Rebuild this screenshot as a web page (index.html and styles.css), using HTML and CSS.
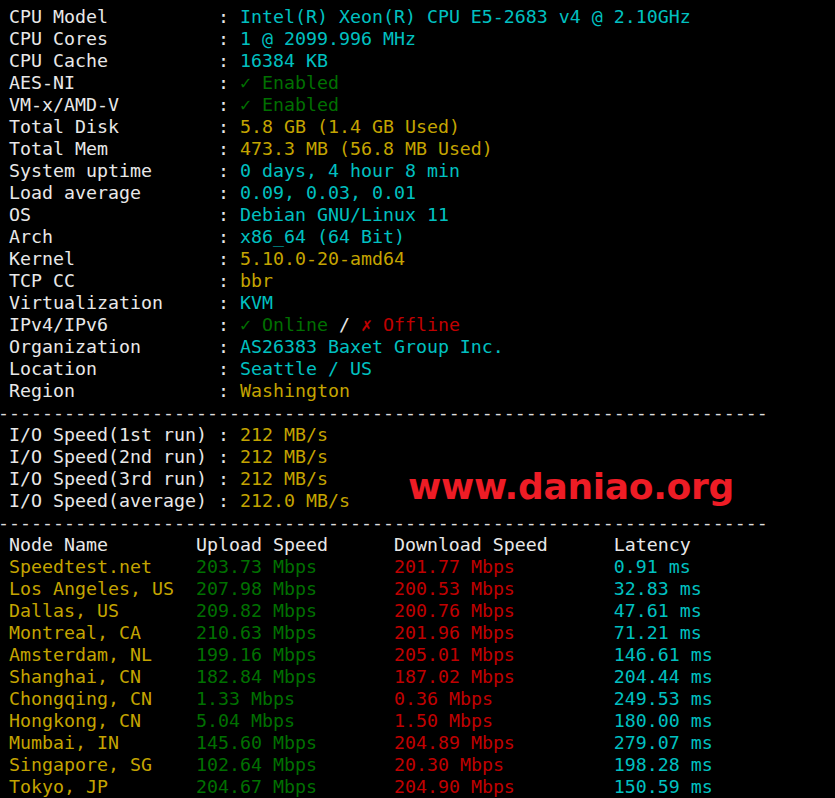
FILE: index.html
```html
<!DOCTYPE html>
<html>
<head>
<meta charset="utf-8">
<link rel="stylesheet" href="styles.css">
</head>
<body>
<div class="term">
<div class="ln">CPU Model          : <span class="c">Intel(R) Xeon(R) CPU E5-2683 v4 @ 2.10GHz</span></div>
<div class="ln">CPU Cores          : <span class="c">1 @ 2099.996 MHz</span></div>
<div class="ln">CPU Cache          : <span class="c">16384 KB</span></div>
<div class="ln">AES-NI             : <span class="g">✓ Enabled</span></div>
<div class="ln">VM-x/AMD-V         : <span class="g">✓ Enabled</span></div>
<div class="ln">Total Disk         : <span class="y">5.8 GB (1.4 GB Used)</span></div>
<div class="ln">Total Mem          : <span class="y">473.3 MB (56.8 MB Used)</span></div>
<div class="ln">System uptime      : <span class="c">0 days, 4 hour 8 min</span></div>
<div class="ln">Load average       : <span class="c">0.09, 0.03, 0.01</span></div>
<div class="ln">OS                 : <span class="c">Debian GNU/Linux 11</span></div>
<div class="ln">Arch               : <span class="c">x86_64 (64 Bit)</span></div>
<div class="ln">Kernel             : <span class="y">5.10.0-20-amd64</span></div>
<div class="ln">TCP CC             : <span class="y">bbr</span></div>
<div class="ln">Virtualization     : <span class="c">KVM</span></div>
<div class="ln">IPv4/IPv6          : <span class="g">✓ Online</span> / <span class="r">✗ Offline</span></div>
<div class="ln">Organization       : <span class="c">AS26383 Baxet Group Inc.</span></div>
<div class="ln">Location           : <span class="c">Seattle / US</span></div>
<div class="ln">Region             : <span class="y">Washington</span></div>
<div class="ln sep">----------------------------------------------------------------------</div>
<div class="ln">I/O Speed(1st run) : <span class="y">212 MB/s</span></div>
<div class="ln">I/O Speed(2nd run) : <span class="y">212 MB/s</span></div>
<div class="ln">I/O Speed(3rd run) : <span class="y">212 MB/s</span></div>
<div class="ln">I/O Speed(average) : <span class="y">212.0 MB/s</span></div>
<div class="ln sep">----------------------------------------------------------------------</div>
<div class="ln">Node Name        Upload Speed      Download Speed      Latency</div>
<div class="ln"><span class="y">Speedtest.net    </span><span class="g">203.73 Mbps       </span><span class="r">201.77 Mbps         </span><span class="c">0.91 ms</span></div>
<div class="ln"><span class="y">Los Angeles, US  </span><span class="g">207.98 Mbps       </span><span class="r">200.53 Mbps         </span><span class="c">32.83 ms</span></div>
<div class="ln"><span class="y">Dallas, US       </span><span class="g">209.82 Mbps       </span><span class="r">200.76 Mbps         </span><span class="c">47.61 ms</span></div>
<div class="ln"><span class="y">Montreal, CA     </span><span class="g">210.63 Mbps       </span><span class="r">201.96 Mbps         </span><span class="c">71.21 ms</span></div>
<div class="ln"><span class="y">Amsterdam, NL    </span><span class="g">199.16 Mbps       </span><span class="r">205.01 Mbps         </span><span class="c">146.61 ms</span></div>
<div class="ln"><span class="y">Shanghai, CN     </span><span class="g">182.84 Mbps       </span><span class="r">187.02 Mbps         </span><span class="c">204.44 ms</span></div>
<div class="ln"><span class="y">Chongqing, CN    </span><span class="g">1.33 Mbps         </span><span class="r">0.36 Mbps           </span><span class="c">249.53 ms</span></div>
<div class="ln"><span class="y">Hongkong, CN     </span><span class="g">5.04 Mbps         </span><span class="r">1.50 Mbps           </span><span class="c">180.00 ms</span></div>
<div class="ln"><span class="y">Mumbai, IN       </span><span class="g">145.60 Mbps       </span><span class="r">204.89 Mbps         </span><span class="c">279.07 ms</span></div>
<div class="ln"><span class="y">Singapore, SG    </span><span class="g">102.64 Mbps       </span><span class="r">20.30 Mbps          </span><span class="c">198.28 ms</span></div>
<div class="ln"><span class="y">Tokyo, JP        </span><span class="g">204.67 Mbps       </span><span class="r">204.90 Mbps         </span><span class="c">150.59 ms</span></div>
<div class="mark">www.daniao.org</div>
</div>
</body>
</html>
```
FILE: styles.css
```css
html, body {
  margin: 0;
  padding: 0;
  background: #000;
  overflow: hidden;
}
.term {
  position: relative;
  width: 835px;
  height: 798px;
  box-sizing: border-box;
  padding: 6px 0 0 9px;
  background: #000;
  color: #e8e8e8;
  font-family: "DejaVu Sans Mono", monospace;
  font-size: 18.27px;
  line-height: 22px;
}
.ln {
  white-space: pre;
  height: 22px;
}
.sep {
  margin-left: -11px;
  color: #dcdcdc;
}
.c { color: #00c0c0; }
.g { color: #007000; }
.y { color: #c4a400; }
.r { color: #c00000; }
.mark {
  position: absolute;
  left: 408px;
  top: 463px;
  font-family: "DejaVu Sans", sans-serif;
  font-weight: bold;
  font-size: 36px;
  line-height: 48px;
  color: #ee1c25;
  letter-spacing: -0.3px;
  white-space: pre;
}
```
